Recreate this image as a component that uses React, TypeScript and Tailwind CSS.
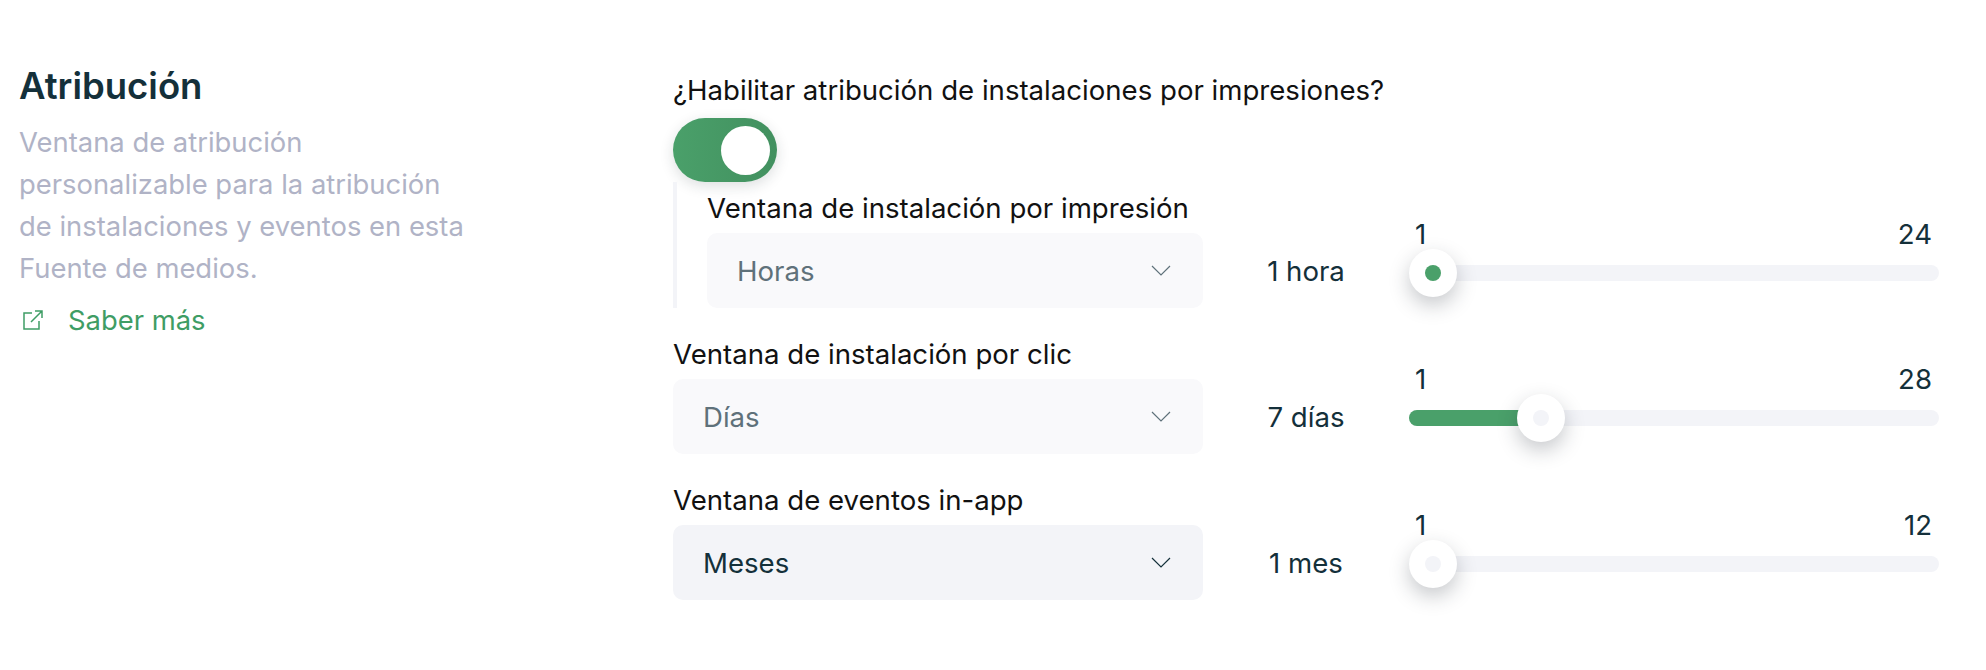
import React from 'react';

const font = "font-['Inter','Noto_Sans',sans-serif]";

function Chevron({ className }: { className: string }) {
  return (
    <svg width="20" height="12" viewBox="0 0 20 12" fill="none" className={className}>
      <path d="M1 1L10 10L19 1" stroke="currentColor" strokeWidth="1.2" />
    </svg>
  );
}

function Select({ value, active }: { value: string; active?: boolean }) {
  return (
    <div
      className={`flex h-[75px] items-center justify-between rounded-[10px] pl-[30px] pr-[32px] ${
        active ? 'bg-[#f3f4f8] text-[#14303a]' : 'bg-[#f9f9fb] text-[#5f717a]'
      }`}
    >
      <span className="pt-[2px]">{value}</span>
      <Chevron className={active ? 'text-[#14303a]' : 'text-[#5f717a]'} />
    </div>
  );
}

function Slider({ max, pct, filled, nested }: { max: number; pct: number; filled?: boolean; nested?: boolean }) {
  return (
    <div className={`w-[530px] shrink-0 text-[#14303a] ${nested ? 'pb-[11px]' : 'pb-[12px]'}`}>
      <div className="flex justify-between pl-[6px] pr-[7px] leading-[32px]">
        <span>1</span>
        <span>{max}</span>
      </div>
      <div className="relative -mt-px flex h-[48px] items-center">
        <div className="h-[16px] w-full overflow-hidden rounded-full bg-[#f3f4f8]">
          {filled && <div className="h-full bg-[#4aa06a]" style={{ width: `${pct + 24}px` }} />}
        </div>
        <div
          className="absolute top-0 flex size-[48px] items-center justify-center rounded-full bg-white shadow-[0_8px_20px_rgba(30,40,50,0.25)]"
          style={{ left: `${pct}px` }}
        >
          <div className={`size-[16px] rounded-full ${nested ? 'bg-[#4aa06a]' : 'bg-[#f3f4f8]'}`} />
        </div>
      </div>
    </div>
  );
}

function Value({ children }: { children: React.ReactNode }) {
  return <div className="flex h-[75px] w-[206px] shrink-0 items-center justify-center pt-[2px] text-[#14303a]">{children}</div>;
}

function Row({ label, select, active, value, max, pct, filled, nested }: {
  label: string; select: string; active?: boolean; value: string; max: number; pct: number; filled?: boolean; nested?: boolean;
}) {
  return (
    <div className="flex items-end">
      <div className="min-w-0 flex-1">
        <div className="mb-[9px] leading-[32px] text-[#111]">{label}</div>
        <Select value={select} active={active} />
      </div>
      <Value>{value}</Value>
      <Slider max={max} pct={pct} filled={filled} nested={nested} />
    </div>
  );
}

export default function App() {
  return (
    <div className={`flex h-[670px] bg-white pl-[19px] pt-[74px] text-[27.6px] ${font}`}>
      <div className="w-[654px] shrink-0 -mt-[10px]">
        <h2 className="mb-[13px] text-[36.5px] font-semibold leading-[44px] text-[#14303a]">Atribución</h2>
        <p className="w-[452px] text-[27.4px] leading-[42px] text-[#b0b3c6]">
          Ventana de atribución personalizable para la atribución de instalaciones y eventos en esta Fuente de medios.
        </p>
        <a className="mt-[10px] flex items-center gap-[24px] text-[27.4px] leading-[42px] text-[#3f9d65]">
          <svg width="22" height="22" viewBox="0 0 22 22" fill="none" className="ml-[3px]">
            <path d="M10 4H2V20H17V12M9 13L20 2M13 2H20V9" stroke="currentColor" strokeWidth="1.5" />
          </svg>
          Saber más
        </a>
      </div>
      <div className="w-[1266px] shrink-0">
        <div className="mb-[12px] leading-[32px] text-[#111]">¿Habilitar atribución de instalaciones por impresiones?</div>
        <div className="flex h-[64px] w-[104px] items-center justify-end rounded-full bg-gradient-to-r from-[#4aa06a] to-[#42905f] pr-[7px] shadow-[0_4px_14px_rgba(30,40,50,0.15)]">
          <div className="size-[49px] rounded-full bg-white" />
        </div>
        <div className="flex flex-col gap-[30px]">
          <div className="border-l-4 border-[#f3f4f8] pl-[30px] pt-[10px]">
            <Row label="Ventana de instalación por impresión" select="Horas" value="1 hora" max={24} pct={0} nested />
          </div>
          <Row label="Ventana de instalación por clic" select="Días" value="7 días" max={28} pct={108} filled />
          <Row label="Ventana de eventos in-app" select="Meses" active value="1 mes" max={12} pct={0} />
        </div>
      </div>
    </div>
  );
}
